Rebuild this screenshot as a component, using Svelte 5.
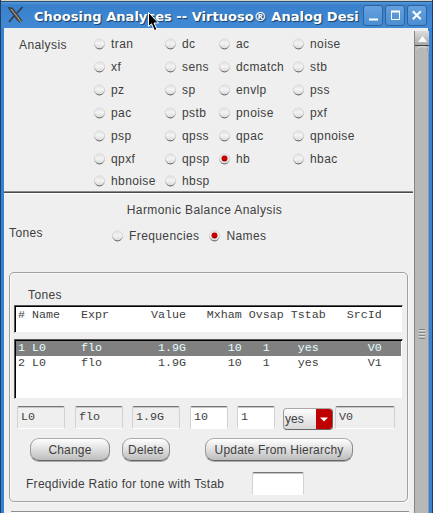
<script>
  const rows = [
    ['tran', 'dc', 'ac', 'noise'],
    ['xf', 'sens', 'dcmatch', 'stb'],
    ['pz', 'sp', 'envlp', 'pss'],
    ['pac', 'pstb', 'pnoise', 'pxf'],
    ['psp', 'qpss', 'qpac', 'qpnoise'],
    ['qpxf', 'qpsp', 'hb', 'hbac'],
    ['hbnoise', 'hbsp'],
  ];
  let analysis = $state('hb');
  let toneMode = $state('Names');
  let selected = $state(0);
  const header = '# Name   Expr      Value   Mxham Ovsap Tstab   SrcId';
  const tones = [
    '1 L0     flo        1.9G      10   1    yes       V0',
    '2 L0     flo        1.9G      10   1    yes       V1',
  ];
</script>

{#snippet radio(name, on, pick)}
  <button class="radio" onclick={pick}>
    <svg width="12" height="12" viewBox="0 0 12 12">
      <defs>
        <linearGradient id="ball" x1="0" y1="0" x2="0" y2="1">
          <stop offset="0" stop-color="#dedede" />
          <stop offset=".45" stop-color="#f4f4f4" />
          <stop offset="1" stop-color="#d8d8d8" />
        </linearGradient>
        <linearGradient id="rim" x1="0" y1="0" x2="0" y2="1">
          <stop offset="0" stop-color="#e0e0e0" />
          <stop offset=".6" stop-color="#cfcfcf" />
          <stop offset=".85" stop-color="#8a8a8a" />
          <stop offset="1" stop-color="#4c4c4c" />
        </linearGradient>
      </defs>
      <circle cx="5.5" cy="5.8" r="5.1" fill="url(#ball)" stroke="url(#rim)" />
      {#if on}<circle cx="5.5" cy="5.5" r="3" fill="#c40000" /><path d="M4 7.5h3" stroke="#800" />{/if}
    </svg>
    <span>{name}</span>
  </button>
{/snippet}

<div class="window">
  <header>
    <svg class="logo" width="18" height="18" viewBox="0 0 18 18">
      <path d="M1 1.5l4.5 0.5 9.5 12.5-2 2-3-2.5z" fill="#4b4a47" stroke="#333b45" stroke-width=".8" />
      <path d="M4 3l8 10" stroke="#b9aa96" />
      <path d="M15.5 1L10 7M7 10L2 16" stroke="#303c48" stroke-width="1.7" />
      <path d="M11 12l3 4" stroke="#b9aa96" />
    </svg>
    <h1>Choosing Analyses -- Virtuoso® Analog Desi</h1>
    <div class="controls">
      <button aria-label="Minimize"><svg width="18" height="19"><path d="M5 13.5h9" stroke="#fff" stroke-width="2" /></svg></button>
      <button aria-label="Maximize"><svg width="18" height="19"><path d="M5 5.5h9" stroke="#fff" stroke-width="2" /><path d="M5.5 5v8.5h8V5" fill="none" stroke="#fff" /></svg></button>
      <button aria-label="Close"><svg width="18" height="19"><path d="M4.8 5.2l8 8M12.8 5.2l-8 8" stroke="#fff" stroke-width="2" /></svg></button>
    </div>
  </header>
  <div class="body">
    <main>
      <section class="analysis">
        <label class="caption" for="choices">Analysis</label>
        <div class="choices" id="choices">
          {#each rows as row}
            <div class="choice-row">
              {#each row as name}
                {@render radio(name, analysis === name, () => (analysis = name))}
              {/each}
            </div>
          {/each}
        </div>
      </section>
      <h2>Harmonic Balance Analysis</h2>
      <section class="mode">
        <span class="mode-label">Tones</span>
        {@render radio('Frequencies', toneMode === 'Frequencies', () => (toneMode = 'Frequencies'))}
        {@render radio('Names', toneMode === 'Names', () => (toneMode = 'Names'))}
      </section>
      <section class="group">
        <h3>Tones</h3>
        <pre class="list head">{header}</pre>
        <div class="list items">
          {#each tones as tone, i}
            <button class="item" class:selected={selected === i} onclick={() => (selected = i)}>{tone}</button>
          {/each}
        </div>
        <div class="fields">
          <div class="field">L0</div>
          <div class="field expr">flo</div>
          <div class="field">1.9G</div>
          <div class="field edit n1">10</div>
          <div class="field edit n2">1</div>
          <button class="combo"><span>yes</span><i><svg width="16" height="20"><path d="M4 8.5h8L8 12.5z" fill="#fff" /></svg></i></button>
          <div class="field src">V0</div>
        </div>
        <div class="buttons">
          <button class="push change">Change</button>
          <button class="push delete">Delete</button>
          <button class="push update">Update From Hierarchy</button>
        </div>
        <div class="ratio">
          <span>Freqdivide Ratio for tone with Tstab</span>
          <div class="field edit ratio-field"></div>
        </div>
      </section>
      <div class="next"></div>
    </main>
    <aside>
      <div class="up"><svg width="14" height="15"><path d="M3 11h9L7.5 5z" fill="#fff" /></svg></div>
      <div class="thumb"><div class="grip"></div></div>
    </aside>
  </div>
  <svg class="pointer" width="13" height="20" viewBox="0 0 13 20">
    <path d="M.5.5v14l3-2.7 3 6.7 2.5-1-3-6.5h4.5z" fill="#000" stroke="#fff" />
  </svg>
</div>

<style>
  :global(body) { margin: 0; overflow: hidden; }
  * { box-sizing: border-box; }
  button { border: 0; padding: 0; margin: 0; background: none; font: inherit; color: inherit; letter-spacing: inherit; }
  svg { display: block; flex: none; }
  .window {
    position: relative; width: 433px; height: 513px; display: flex; flex-direction: column;
    background: #3482d3; border-left: 1px solid #1d4064; border-right: 1px solid #1d4064;
    font: 12px/14px "Liberation Sans", Arial, sans-serif; letter-spacing: .4px; color: #404040; overflow: hidden;
  }
  header {
    height: 28px; flex: none; display: flex; align-items: flex-start; padding: 2px 4px 0 6px;
    background: linear-gradient(#62a1dd, #3a80cc 4px, #3d86d2 16px, #4289d3);
    border-top: 1px solid #d5d3c6; box-shadow: inset 0 1px #245079;
  }
  .logo { margin-top: 3px; }
  h1 {
    flex: none; width: 332px; margin: 6px 0 0 9px; overflow: hidden; white-space: nowrap;
    font: bold 13px/16px "DejaVu Sans", sans-serif; letter-spacing: .03px; color: #fff; text-shadow: 1px 1px 1px #183c64;
  }
  .controls { display: flex; gap: 2px; margin: 2px 0 0 -3px; }
  .controls button {
    width: 20px; height: 21px; border: 1px solid #2c639d; border-radius: 3px;
    background: linear-gradient(#65a0dc, #4c8ed3); display: flex;
  }
  .body { flex: 1; min-height: 0; display: flex; margin-left: 3px; margin-right: 4px; background: #efefef; }
  main { width: 410px; flex: none; display: flex; flex-direction: column; padding-right: 1px; }
  .analysis { height: 165px; flex: none; display: flex; padding: 5px 0 0 15px; border-bottom: 1px solid #4a4a4a; box-shadow: 0 1px #fff, inset 0 -1px #8a8a8a; }
  .caption { width: 75px; padding-top: 5px; }
  .choice-row { height: 22.83px; display: grid; grid-template-columns: 71px 54px 74px 80px; align-items: center; }
  .radio { display: flex; align-items: center; gap: 5px; white-space: nowrap; text-align: left; height: 20px; }
  h2 { font: inherit; text-align: center; margin: 10px 0 0; padding-right: 8px; }
  .mode { display: flex; margin: 9px 0 26px 5px; height: 21px; }
  .mode-label { width: 103px; }
  .mode .radio { margin-right: 10px; }
  .group {
    height: 230px; flex: none; width: 399px; margin-left: 5px; border: 1px solid #a0a0a0; border-radius: 5px;
    box-shadow: inset 1px 1px #f8f8f8, 1px 1px #f8f8f8; padding: 15px 4px 0;
  }
  h3 { font: inherit; margin: 0 0 3px 14px; }
  .list {
    width: 389px; background: #fff; border: 1px solid; border-color: #555 #eee #eee #555; box-shadow: inset 1px 1px #000;
    font: 11.667px/15px "Liberation Mono", "Courier New", monospace; letter-spacing: 0; margin: 0; padding: 2px 1px 0;
  }
  .head { height: 28px; padding-left: 3px; }
  .items { height: 60px; margin-top: 6px; padding-top: 1px; }
  .item { display: block; width: 100%; height: 15px; padding-left: 2px; white-space: pre; text-align: left; }
  .selected { background: #808080; color: #e4ffff; }
  .fields { display: flex; height: 24px; margin: 7px 0 0 3px; }
  .field {
    flex: none; width: 48px; height: 23px; margin-right: 10px; padding-left: 3px; border: 1px solid;
    border-color: #777 #d2d2d2 #fff; border-radius: 2px; box-shadow: inset 0 1px #c5c5c5;
    font: 11.667px/21px "Liberation Mono", "Courier New", monospace; letter-spacing: 0;
  }
  .expr { margin-right: 9px; }
  .edit { background: #fff; }
  .n1 { width: 38px; margin-right: 9px; }
  .n2 { width: 38px; margin-right: 8px; }
  .src { width: 60px; margin: 0; }
  .combo {
    display: flex; width: 50px; height: 22px; margin: 2px 2px 0 0; border: 1px solid #888; border-color: #aaa #666 #666 #999;
    border-radius: 4px; overflow: hidden; background: linear-gradient(#fdfdfd, #d8d8d8);
  }
  .combo span { width: 32px; flex: none; padding: 3px 0 0 1px; text-align: left; letter-spacing: 0; }
  .combo i { width: 16px; background: #be0000; }
  .buttons { display: flex; margin: 8px 0 0 16px; height: 24px; letter-spacing: .2px; }
  .push {
    height: 23px; border: 1px solid; border-color: #aaa #888 #656565 #999; border-radius: 9px; white-space: nowrap;
    background: linear-gradient(#fff, #e2e2e2 45%, #bdbdbd); box-shadow: 0 1px #aaa;
  }
  .change { width: 80px; margin-right: 12px; }
  .delete { width: 48px; margin-right: 35px; }
  .update { width: 148px; }
  .ratio { display: flex; margin: 10px 0 0 12px; letter-spacing: .29px; }
  .ratio span { width: 226px; padding-top: 5px; white-space: nowrap; }
  .ratio-field { width: 52px; }
  .next { height: 2px; margin: 9px 4px 0 7px; border-top: 1px solid #909090; background: #fff; }
  aside { width: 15px; flex: none; display: flex; flex-direction: column; background: #b8b8b8; border-left: 1px solid #858585; margin-top: 3px; }
  .up { height: 15px; flex: none; background: linear-gradient(#ddd, #a8a8a8); border-bottom: 1px solid #444; }
  .thumb {
    flex: 1; border-radius: 7px 7px 0 0; background: #b8b8b8; border-top: 1px solid #ddd;
    border-right: 1px solid #999; display: flex; justify-content: center; padding-top: 282px;
  }
  .grip { width: 6px; height: 10px; background: repeating-linear-gradient(#858585 0 1px, #dedede 1px 2px, #b8b8b8 2px 3px); }
  .pointer { position: absolute; left: 147px; top: 12px; }
</style>
